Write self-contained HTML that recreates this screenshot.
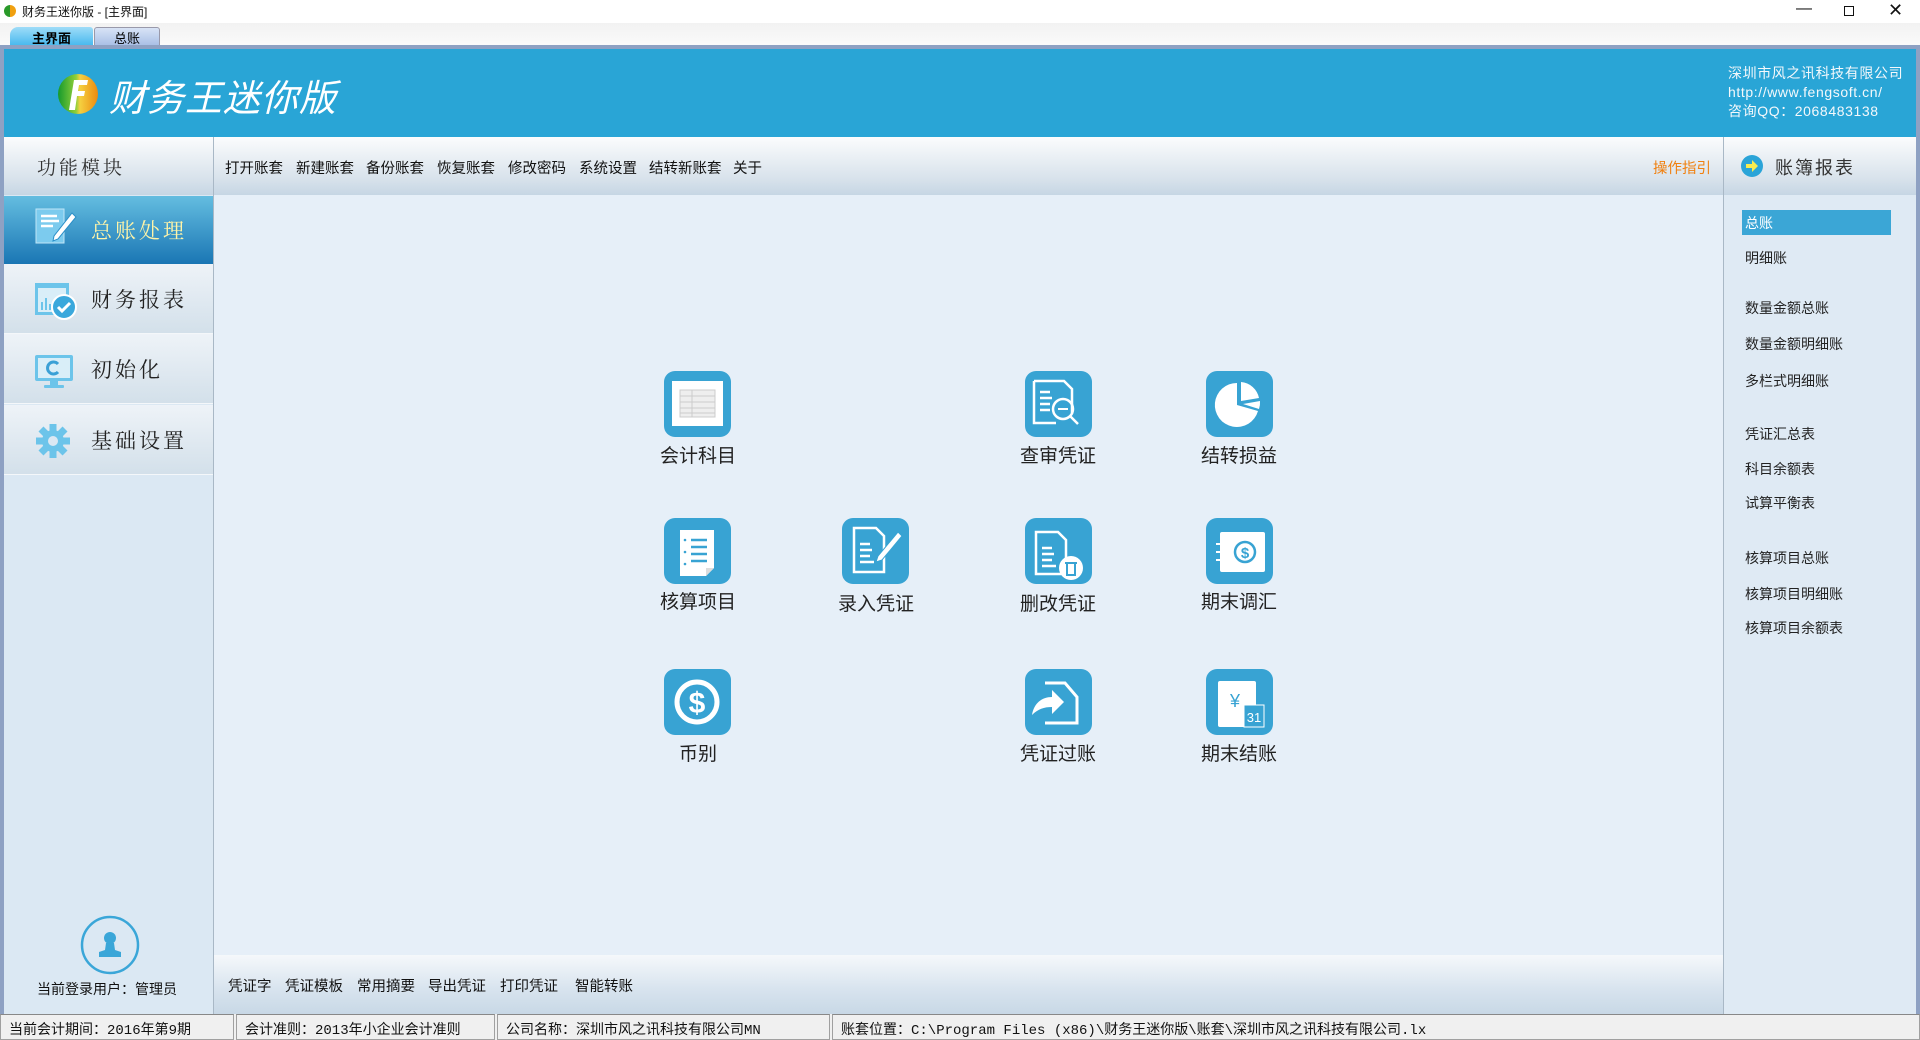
<!DOCTYPE html>
<html><head><meta charset="utf-8"><style>
*{margin:0;padding:0;box-sizing:border-box}
body{width:1920px;height:1040px;overflow:hidden;background:#f0f0f0;font-family:"Liberation Sans","Noto Sans CJK SC",sans-serif;position:relative}
.a{position:absolute}
.t{white-space:nowrap}
.side{left:4px;width:209px;height:70px;background:linear-gradient(#eef3f8,#d3e0ea);border-bottom:1px solid #f4f7fa}
.side span{position:absolute;left:87px;top:20px;font-size:21px;letter-spacing:3px;color:#222;font-family:"Noto Serif CJK SC","Liberation Serif",serif}
.ic{width:67px;height:66px;border-radius:11px;background:#38a3d3}
.lb{font-size:19px;color:#222;width:140px;text-align:center}
.rt{left:1745px;font-size:14px;color:#222}
.mn{top:157px;font-size:14.5px;color:#111}
.bt{top:975px;font-size:14.5px;color:#111}
.st{top:1014px;height:26px;background:#f0f0f0;border:1px solid #a0a0a0;border-top-color:#888;font-size:14px;color:#111;padding:4px 8px;font-family:"Liberation Mono","Noto Sans CJK SC",monospace}
</style></head><body>
<div class="a" style="left:0;top:0;width:1920px;height:23px;background:#fff"></div>
<div class="a" style="left:4px;top:5px;width:12px;height:12px;border-radius:50%;background:linear-gradient(90deg,#2a9a2a 50%,#f0a010 50%)"></div>
<div class="a t" style="left:22px;top:3px;font-size:12px;color:#111">财务王迷你版 - [主界面]</div>
<div class="a t" style="left:1796px;top:0;font-size:16px;color:#111">—</div>
<div class="a" style="left:1844px;top:6px;width:10px;height:10px;border:1px solid #111"></div>
<div class="a t" style="left:1888px;top:0;font-size:18px;color:#111">✕</div>
<div class="a" style="left:0;top:23px;width:1920px;height:22px;background:linear-gradient(#f2f2f2,#fafafa)"></div>
<div class="a t" style="left:10px;top:27px;width:83px;height:19px;background:linear-gradient(#9fdcf8,#46b8ee);border-radius:8px 3px 0 0;font-size:13px;font-weight:bold;text-align:center;padding-top:1px">主界面</div>
<div class="a t" style="left:94px;top:27px;width:66px;height:19px;background:linear-gradient(#d8e3f6,#aac0e6);border:1px solid #99a;border-radius:3px 3px 0 0;font-size:13px;text-align:center">总账</div>
<div class="a" style="left:0;top:45px;width:1920px;height:4px;background:#8ea1c3"></div>
<div class="a" style="left:0;top:45px;width:4px;height:970px;background:#8ea1c3"></div>
<div class="a" style="left:1916px;top:45px;width:4px;height:970px;background:#8ea1c3"></div>
<div class="a" style="left:4px;top:49px;width:1912px;height:88px;background:#29a5d6"></div>
<svg class="a" style="left:56px;top:72px" width="44" height="44"><defs><linearGradient id="lg" x1="0" x2="1"><stop offset="0" stop-color="#159a2c"/><stop offset=".45" stop-color="#8fcf3a"/><stop offset=".55" stop-color="#f5d040"/><stop offset="1" stop-color="#ec8a10"/></linearGradient></defs><circle cx="22" cy="22" r="20" fill="url(#lg)"/><path d="M18 8 L32 8 L31 13 L23 13 L22 19 L29 19 L28 24 L21 24 L19 38 L13 38 Z" fill="#fff"/></svg>
<div class="a t" style="left:109px;top:68px;font-size:37px;color:#fff;font-style:italic;letter-spacing:1px">财务王迷你版</div>
<div class="a t" style="left:1728px;top:64px;font-size:14px;color:#f4f8fb;line-height:19px;letter-spacing:.6px">深圳市风之讯科技有限公司<br>http://www.fengsoft.cn/<br>咨询QQ：2068483138</div>
<div class="a" style="left:4px;top:137px;width:1912px;height:58px;background:linear-gradient(#fbfcfd,#d9e3ec 70%,#c6d6e4)"></div>
<div class="a" style="left:213px;top:137px;width:1px;height:878px;background:#a9b8c6"></div>
<div class="a" style="left:1723px;top:137px;width:1px;height:878px;background:#a9b8c6"></div>
<div class="a t" style="left:37px;top:153px;font-size:19px;color:#333;letter-spacing:3px;font-family:'Noto Serif CJK SC',serif">功能模块</div>
<div class="a t mn" style="left:225px">打开账套</div><div class="a t mn" style="left:296px">新建账套</div><div class="a t mn" style="left:366px">备份账套</div><div class="a t mn" style="left:437px">恢复账套</div><div class="a t mn" style="left:508px">修改密码</div><div class="a t mn" style="left:579px">系统设置</div><div class="a t mn" style="left:649px">结转新账套</div><div class="a t mn" style="left:733px">关于</div>
<div class="a t mn" style="left:1653px;color:#f08010">操作指引</div>
<svg class="a" style="left:1740px;top:154px" width="24" height="24"><circle cx="12" cy="12" r="11" fill="#2aa4d8"/><path d="M6 10h6V6l6 6-6 6v-4H6z" fill="#f8ec50"/></svg>
<div class="a t" style="left:1775px;top:154px;font-size:18px;color:#333;letter-spacing:2px">账簿报表</div>
<div class="a" style="left:4px;top:195px;width:209px;height:820px;background:#dbe8f3"></div>
<div class="a" style="left:4px;top:196px;width:209px;height:68px;background:linear-gradient(#64bde0,#1a76b4)"></div>
<div class="a t" style="left:91px;top:215px;font-size:21px;color:#fff4a8;letter-spacing:3px;font-family:'Noto Serif CJK SC',serif">总账处理</div>
<svg class="a" style="left:34px;top:207px" width="44" height="44"><rect x="2" y="2" width="28" height="34" fill="#7ccbee" stroke="#bfe6f7"/><path d="M7 9h16M7 14h18M7 19h12" stroke="#fff" stroke-width="2.5"/><path d="M38 6l4 4-18 22-5 2 1-5z" fill="#fff" stroke="#2a8fc8"/></svg>
<div class="a side" style="top:264px"><span>财务报表</span></div>
<svg class="a" style="left:34px;top:282px" width="44" height="40"><rect x="1" y="1" width="34" height="32" fill="#6cc4ea"/><rect x="4" y="6" width="28" height="24" fill="#d9eef8"/><path d="M8 28v-8M12 28v-12M16 28v-6" stroke="#6cc4ea" stroke-width="2"/><circle cx="30" cy="25" r="12" fill="#3aa8dc" stroke="#fff" stroke-width="2"/><path d="M24 25l4 4 8-8" stroke="#fff" stroke-width="3" fill="none"/></svg>
<div class="a side" style="top:334px"><span>初始化</span></div>
<svg class="a" style="left:34px;top:354px" width="40" height="36"><rect x="1" y="1" width="38" height="26" rx="2" fill="#6cc4ea"/><rect x="4" y="4" width="32" height="20" fill="#d9eef8"/><path d="M24 10a6 6 0 1 0 0 8" stroke="#3aa0d6" stroke-width="3" fill="none"/><rect x="16" y="27" width="8" height="4" fill="#6cc4ea"/><rect x="10" y="31" width="20" height="3" rx="1" fill="#6cc4ea"/></svg>
<div class="a side" style="top:405px"><span>基础设置</span></div>
<svg class="a" style="left:35px;top:423px" width="36" height="36"><g fill="#6cc4ea" transform="translate(18 18)"><circle r="11"/><rect x="-3.5" y="-17" width="7" height="34"/><rect x="-17" y="-3.5" width="34" height="7"/><rect x="-3.5" y="-17" width="7" height="34" transform="rotate(45)"/><rect x="-3.5" y="-17" width="7" height="34" transform="rotate(-45)"/></g><circle cx="18" cy="18" r="5" fill="#dbe8f3"/></svg>
<svg class="a" style="left:79px;top:914px" width="62" height="62"><circle cx="31" cy="31" r="28" fill="none" stroke="#3aa6d8" stroke-width="2.5"/><circle cx="31" cy="24" r="6" fill="#3aa6d8"/><path d="M27 29h8l1 7 6 2v5H20v-5l6-2z" fill="#3aa6d8"/></svg>
<div class="a t" style="left:37px;top:979px;font-size:14px;color:#111">当前登录用户：管理员</div>
<div class="a" style="left:214px;top:195px;width:1509px;height:760px;background:#e6eff8"></div>
<div class="a" style="left:214px;top:955px;width:1509px;height:59px;background:linear-gradient(#f5f8fb,#d7e3ee 60%,#c8d8e6)"></div>
<div class="a t bt" style="left:228px">凭证字</div><div class="a t bt" style="left:285px">凭证模板</div><div class="a t bt" style="left:357px">常用摘要</div><div class="a t bt" style="left:428px">导出凭证</div><div class="a t bt" style="left:500px">打印凭证</div><div class="a t bt" style="left:575px">智能转账</div>
<div class="a" style="left:1724px;top:195px;width:192px;height:820px;background:#dfeaf4"></div>
<div class="a" style="left:1742px;top:210px;width:149px;height:25px;background:#3ba6d6"></div>
<div class="a t rt" style="top:213px;color:#fff">总账</div>
<div class="a t rt" style="top:248px">明细账</div>
<div class="a t rt" style="top:298px">数量金额总账</div>
<div class="a t rt" style="top:334px">数量金额明细账</div>
<div class="a t rt" style="top:371px">多栏式明细账</div>
<div class="a t rt" style="top:424px">凭证汇总表</div>
<div class="a t rt" style="top:459px">科目余额表</div>
<div class="a t rt" style="top:493px">试算平衡表</div>
<div class="a t rt" style="top:548px">核算项目总账</div>
<div class="a t rt" style="top:584px">核算项目明细账</div>
<div class="a t rt" style="top:618px">核算项目余额表</div>
<div class="a ic" style="left:664px;top:371px"><svg width="67" height="66"><rect x="8" y="10" width="51" height="45" fill="#fff"/><rect x="16" y="19" width="35" height="27" fill="#eee" stroke="#ccc"/><path d="M16 25h35M16 31h35M16 37h35M16 42h35M28 19v27" stroke="#ccc"/></svg></div>
<div class="a t lb" style="left:628px;top:441px">会计科目</div>
<div class="a ic" style="left:1025px;top:371px"><svg width="67" height="66"><path d="M9 10h30l8 8v24M9 10v42h22" fill="none" stroke="#fff" stroke-width="2.5"/><path d="M15 21h10M15 27h12M15 33h10M15 39h10" stroke="#fff" stroke-width="2.5"/><circle cx="38" cy="38" r="10" fill="none" stroke="#fff" stroke-width="2.5"/><path d="M45 45l8 8" stroke="#fff" stroke-width="2.5"/><path d="M33 38h10" stroke="#fff" stroke-width="2"/></svg></div>
<div class="a t lb" style="left:988px;top:441px">查审凭证</div>
<div class="a ic" style="left:1206px;top:371px"><svg width="67" height="66"><path d="M31 12a22 22 0 1 0 21 28l-21-6z" fill="#fff"/><path d="M35 11a20 20 0 0 1 18 16l-18 3z" fill="#fff"/><path d="M37 33l17-3a20 20 0 0 1-1 8z" fill="#fff"/></svg></div>
<div class="a t lb" style="left:1169px;top:441px">结转损益</div>
<div class="a ic" style="left:664px;top:518px"><svg width="67" height="66"><path d="M16 12h34v38l-8 8H16z" fill="#fff"/><path d="M42 58l8-8h-8z" fill="#ddd"/><path d="M27 22h16M27 29h16M27 36h16M27 43h16" stroke="#38a3d3" stroke-width="2.5"/><circle cx="21" cy="22" r="1.3" fill="#38a3d3"/><circle cx="21" cy="34" r="1.3" fill="#38a3d3"/><circle cx="21" cy="46" r="1.3" fill="#38a3d3"/></svg></div>
<div class="a t lb" style="left:628px;top:587px">核算项目</div>
<div class="a ic" style="left:842px;top:518px"><svg width="67" height="66"><path d="M12 10h22l8 8v36H12z" fill="none" stroke="#fff" stroke-width="2.5"/><path d="M18 26h10M18 32h12M18 38h10M18 44h14" stroke="#fff" stroke-width="2.5"/><path d="M56 14l4 4-20 24-6 2 2-6z" fill="#fff" stroke="#38a3d3"/></svg></div>
<div class="a t lb" style="left:806px;top:589px">录入凭证</div>
<div class="a ic" style="left:1025px;top:518px"><svg width="67" height="66"><path d="M11 14h22l8 8v34H11z" fill="none" stroke="#fff" stroke-width="2.5"/><path d="M17 30h10M17 36h12M17 42h10M17 48h14" stroke="#fff" stroke-width="2.5"/><circle cx="46" cy="50" r="12" fill="#fff"/><path d="M40 45h12M42 46v11h8V46" stroke="#38a3d3" stroke-width="2" fill="none"/></svg></div>
<div class="a t lb" style="left:988px;top:589px">删改凭证</div>
<div class="a ic" style="left:1206px;top:518px"><svg width="67" height="66"><rect x="14" y="14" width="45" height="40" rx="2" fill="#fff"/><circle cx="39" cy="34" r="10" fill="none" stroke="#38a3d3" stroke-width="2.5"/><text x="39" y="40" font-size="15" font-weight="bold" fill="#38a3d3" text-anchor="middle" font-family="Liberation Sans">$</text><path d="M10 26h6M10 34h6M10 42h6" stroke="#fff" stroke-width="2"/></svg></div>
<div class="a t lb" style="left:1169px;top:587px">期末调汇</div>
<div class="a ic" style="left:664px;top:669px"><svg width="67" height="66"><circle cx="33" cy="33" r="20" fill="none" stroke="#fff" stroke-width="5"/><text x="33" y="44" font-size="30" font-weight="bold" fill="#fff" text-anchor="middle" font-family="Liberation Sans">$</text></svg></div>
<div class="a t lb" style="left:628px;top:739px">币别</div>
<div class="a ic" style="left:1025px;top:669px"><svg width="67" height="66"><path d="M20 14h20l12 14v26H20" fill="none" stroke="#fff" stroke-width="3"/><path d="M7 46c2-12 10-18 20-18v-7l12 12-12 12v-7c-8 0-14 2-20 8z" fill="#fff"/></svg></div>
<div class="a t lb" style="left:988px;top:739px">凭证过账</div>
<div class="a ic" style="left:1206px;top:669px"><svg width="67" height="66"><rect x="12" y="12" width="38" height="46" rx="2" fill="#fff"/><text x="29" y="38" font-size="18" fill="#38a3d3" text-anchor="middle" font-family="Liberation Sans">¥</text><rect x="38" y="36" width="20" height="22" fill="#38a3d3" stroke="#fff"/><text x="48" y="53" font-size="13" fill="#fff" text-anchor="middle" font-family="Liberation Sans">31</text></svg></div>
<div class="a t lb" style="left:1169px;top:739px">期末结账</div>
<div class="a t st" style="left:0;width:234px">当前会计期间：2016年第9期</div>
<div class="a t st" style="left:236px;width:259px">会计准则：2013年小企业会计准则</div>
<div class="a t st" style="left:497px;width:333px">公司名称：深圳市风之讯科技有限公司MN</div>
<div class="a t st" style="left:832px;width:1088px">账套位置：C:\Program Files (x86)\财务王迷你版\账套\深圳市风之讯科技有限公司.lx</div>
</body></html>
